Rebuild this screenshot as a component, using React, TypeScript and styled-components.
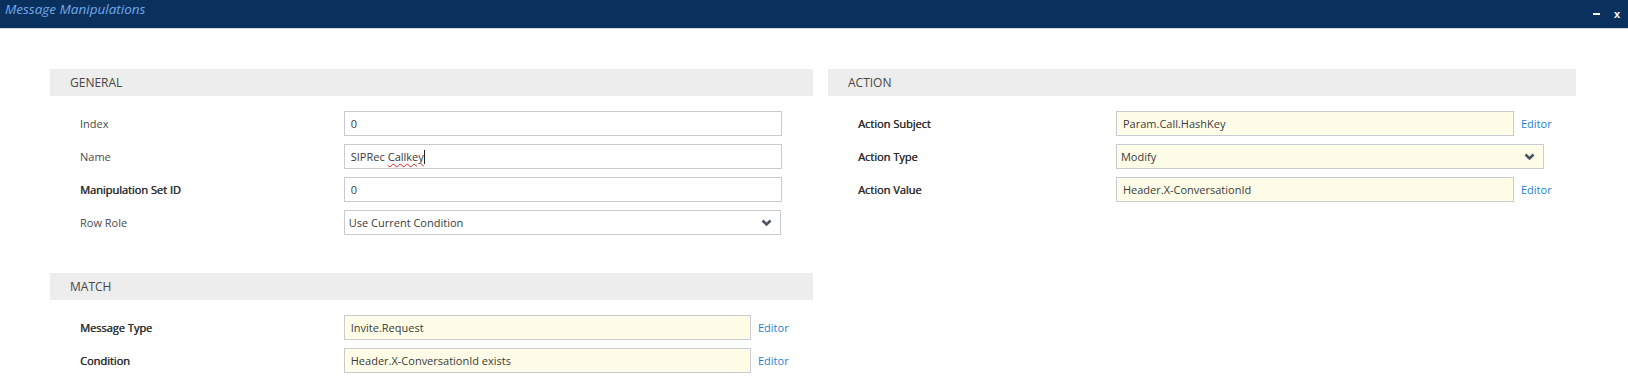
import styled, { createGlobalStyle } from "styled-components"

const GlobalStyle = createGlobalStyle`
    html, body {
        margin: 0;
        padding: 0;
        background: #ffffff;
    }
    body {
        font-family: "Open Sans", "Liberation Sans", Arial, sans-serif;
        color: #3b3b3b;
    }
`

interface FieldData {
    label: string,
    value: string,
    bold?: boolean,
    kind: "text" | "select" | "editor",
    typing?: boolean
}

const general: FieldData[] = [
    { label: "Index", value: "0", kind: "text" },
    { label: "Name", value: "SIPRec Callkey", kind: "text", typing: true },
    { label: "Manipulation Set ID", value: "0", kind: "text", bold: true },
    { label: "Row Role", value: "Use Current Condition", kind: "select" },
]

const match: FieldData[] = [
    { label: "Message Type", value: "Invite.Request", kind: "editor", bold: true },
    { label: "Condition", value: "Header.X-ConversationId exists", kind: "editor", bold: true },
]

const action: FieldData[] = [
    { label: "Action Subject", value: "Param.Call.HashKey", kind: "editor", bold: true },
    { label: "Action Type", value: "Modify", kind: "select", bold: true },
    { label: "Action Value", value: "Header.X-ConversationId", kind: "editor", bold: true },
]

function Chevron() {
    return (
        <svg width="11" height="8" viewBox="0 0 11 8">
            <polyline points="1.5,1.5 5.5,5.5 9.5,1.5" fill="none" stroke="#4a5562" strokeWidth="2.6" />
        </svg>
    )
}

function Value({ field }: { field: FieldData }) {
    if (field.typing) {
        const [first, ...rest] = field.value.split(" ")
        return (
            <>
                {first} <Misspelled>{rest.join(" ")}</Misspelled><Caret />
            </>
        )
    }
    return <>{field.value}</>
}

function Field({ field }: { field: FieldData }) {
    return (
        <Row>
            <Label $bold={field.bold}>{field.label}</Label>
            <FieldCell>
                {field.kind === "select" && (
                    <SelectBox $cream={field.bold}>
                        <span>{field.value}</span>
                        <Chevron />
                    </SelectBox>
                )}
                {field.kind === "text" && (
                    <TextBox $cream={false} $short={false}>
                        <Value field={field} />
                    </TextBox>
                )}
                {field.kind === "editor" && (
                    <>
                        <TextBox $cream={true} $short={true}>
                            <Value field={field} />
                        </TextBox>
                        <EditorLink>Editor</EditorLink>
                    </>
                )}
            </FieldCell>
        </Row>
    )
}

function Section({ title, fields }: { title: string, fields: FieldData[] }) {
    return (
        <SectionBox>
            <Band>{title}</Band>
            <Rows>
                {fields.map((field, index) => (
                    <Field key={index} field={field} />
                ))}
            </Rows>
        </SectionBox>
    )
}

export default function App() {
    return (
        <>
            <GlobalStyle />
            <TitleBar>
                <Title>Message Manipulations</Title>
                <WindowButtons>
                    <Minimize />
                    <Close>x</Close>
                </WindowButtons>
            </TitleBar>
            <Content>
                <Column>
                    <Section title="GENERAL" fields={general} />
                    <Section title="MATCH" fields={match} />
                </Column>
                <Column $right>
                    <Section title="ACTION" fields={action} />
                </Column>
            </Content>
        </>
    )
}

const TitleBar = styled.div`
    height: 28px;
    background-color: #0a315e;
    border-bottom: 1px solid #d3d7dc;
    display: flex;
    align-items: flex-start;
    justify-content: space-between;
    padding: 0 8px 0 5px;
`
const Title = styled.span`
    font-style: italic;
    font-size: 13.5px;
    line-height: 19px;
    color: #72a9ec;
`
const WindowButtons = styled.div`
    display: flex;
    align-items: center;
    gap: 14px;
    height: 27px;
`
const Minimize = styled.span`
    display: block;
    width: 7px;
    height: 2px;
    background: #ffffff;
    margin-top: 1px;
`
const Close = styled.span`
    color: #ffffff;
    font-weight: 700;
    font-size: 11px;
    line-height: 12px;
    font-family: "Liberation Sans", Arial, sans-serif;
`
const Content = styled.div`
    display: grid;
    grid-template-columns: 50% 50%;
    padding: 40px 52px 0 50px;
`
const Column = styled.div<{ $right?: boolean }>`
    min-width: 0;
    display: flex;
    flex-direction: column;
    gap: 38px;
    padding-left: ${p => p.$right ? "15px" : "0"};
`
const SectionBox = styled.div`
    display: flex;
    flex-direction: column;
`
const Band = styled.div`
    height: 27px;
    background-color: #ededed;
    display: flex;
    align-items: center;
    padding-left: 20px;
    font-size: 12px;
    color: #474747;
`
const Rows = styled.div`
    display: flex;
    flex-direction: column;
    gap: 8px;
    padding-top: 15px;
`
const Row = styled.div`
    display: grid;
    grid-template-columns: 38.5% minmax(0, 1fr);
    align-items: center;
    height: 25px;
`
const Label = styled.span<{ $bold?: boolean }>`
    padding-left: 30px;
    font-size: 11px;
    font-weight: 400;
    color: ${p => p.$bold ? "#2e2e2e" : "#4a4a4a"};
    text-shadow: ${p => p.$bold ? "0.4px 0 0 #2e2e2e" : "none"};
`
const FieldCell = styled.div`
    display: flex;
    align-items: center;
`
const TextBox = styled.div<{ $cream: boolean, $short: boolean }>`
    box-sizing: border-box;
    width: ${p => p.$short ? "calc(100% - 62px)" : "calc(100% - 31px)"};
    height: 25px;
    border: 1px solid #c8cbd0;
    background-color: ${p => p.$cream ? "#fffde7" : "#ffffff"};
    padding: 0 6px;
    font-size: 11px;
    line-height: 23px;
    color: #3a3a3a;
    white-space: nowrap;
    overflow: hidden;
    display: flex;
    align-items: center;
`
const SelectBox = styled.div<{ $cream?: boolean }>`
    box-sizing: border-box;
    width: calc(100% - 32px);
    height: 25px;
    border: 1px solid #c8cbd0;
    background-color: ${p => p.$cream ? "#fffde7" : "#ffffff"};
    padding: 0 8px 0 4px;
    font-size: 11px;
    color: #3a3a3a;
    display: flex;
    align-items: center;
    justify-content: space-between;
`
const Misspelled = styled.span`
    margin-left: 3px;
    text-decoration: underline wavy #e02020;
    text-decoration-thickness: 1px;
    text-underline-offset: 2px;
`
const Caret = styled.span`
    display: inline-block;
    width: 1px;
    height: 14px;
    background: #222222;
`
const EditorLink = styled.span`
    margin-left: 7px;
    font-size: 11px;
    color: #1d7fd2;
    cursor: pointer;
`
